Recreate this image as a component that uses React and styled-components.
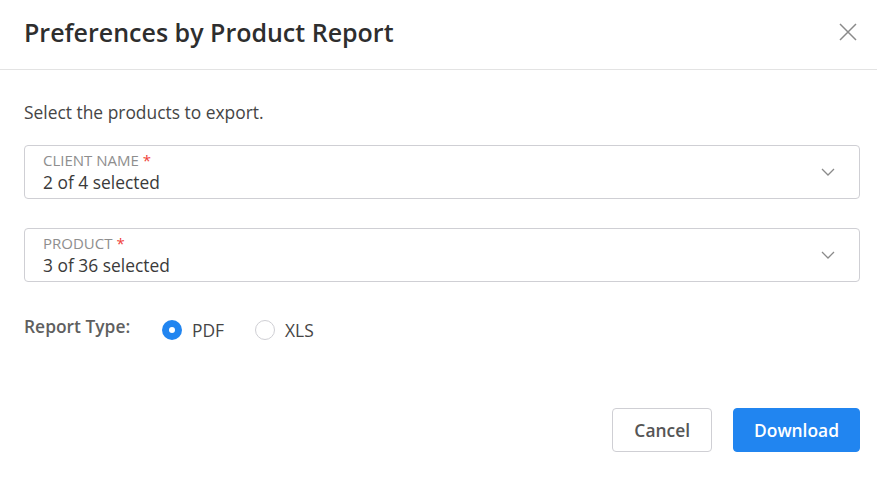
import React, { useState } from 'react';
import styled, { createGlobalStyle } from 'styled-components';

const GlobalStyle = createGlobalStyle`
  html, body {
    margin: 0;
    padding: 0;
    background: #fff;
    font-family: "Open Sans", "Noto Sans", Arial, sans-serif;
  }
  * { box-sizing: border-box; }
`;

const Modal = styled.div`
  width: 877px;
  height: 480px;
  background: #fff;
  display: flex;
  flex-direction: column;
`;

const Header = styled.header`
  height: 70px;
  display: flex;
  align-items: center;
  justify-content: space-between;
  padding: 0 17px 6px 24px;
  border-bottom: 1px solid #e3e3e3;
`;

const Title = styled.h1`
  margin: 0;
  font-size: 25px;
  font-weight: 600;
  color: #2e2e2e;
`;

const CloseButton = styled.button`
  border: 0;
  background: none;
  padding: 0;
  width: 24px;
  height: 24px;
  display: flex;
  align-items: center;
  justify-content: center;
  cursor: pointer;
`;

const Body = styled.div`
  padding: 30px 17px 0 24px;
  display: flex;
  flex-direction: column;
`;

const Intro = styled.p`
  margin: 0 0 21px;
  font-size: 17.4px;
  line-height: 24px;
  color: #454545;
`;

const SelectBox = styled.div`
  height: 54px;
  border: 1px solid #cfcfd4;
  border-radius: 4px;
  padding: 0 24px 0 18px;
  display: flex;
  align-items: center;
  justify-content: space-between;
  margin-bottom: 29px;
  cursor: pointer;
`;

const SelectText = styled.div`
  display: flex;
  flex-direction: column;
`;

const FieldLabel = styled.span`
  font-size: 15px;
  line-height: 19px;
  color: #8e8e8e;
  text-transform: uppercase;
`;

const Required = styled.span`
  color: #f0413a;
  margin-left: 4px;
`;

const FieldValue = styled.span`
  font-size: 17.4px;
  line-height: 24px;
  color: #3a3a3a;
`;

const TypeRow = styled.div`
  display: flex;
  align-items: center;
  margin-top: 7px;
`;

const TypeLabel = styled.span`
  font-size: 17.4px;
  font-weight: 600;
  color: #5f5f5f;
  width: 138px;
  margin-top: -8px;
`;

const RadioOption = styled.label`
  display: flex;
  align-items: center;
  gap: 10px;
  margin-right: 31px;
  font-size: 17.4px;
  color: #454545;
  cursor: pointer;
`;

const RadioDot = styled.span`
  width: 20px;
  height: 20px;
  border-radius: 50%;
  border: ${p => (p.$checked ? '0' : '1px solid #cfcfd4')};
  background: ${p => (p.$checked ? '#2185f0' : '#fff')};
  display: flex;
  align-items: center;
  justify-content: center;
  &::after {
    content: '';
    display: ${p => (p.$checked ? 'block' : 'none')};
    width: 6px;
    height: 6px;
    border-radius: 50%;
    background: #fff;
  }
`;

const Footer = styled.div`
  margin-top: auto;
  padding: 0 17px 28px 24px;
  display: flex;
  justify-content: flex-end;
  gap: 21px;
`;

const Button = styled.button`
  height: 44px;
  padding: 0 ${p => (p.$primary ? '20px' : '21px')};
  border-radius: 4px;
  font-family: inherit;
  font-size: 17.4px;
  font-weight: 600;
  cursor: pointer;
  border: 1px solid ${p => (p.$primary ? '#2185f0' : '#cfcfd4')};
  background: ${p => (p.$primary ? '#2185f0' : '#fff')};
  color: ${p => (p.$primary ? '#fff' : '#555')};
`;

function Chevron() {
  return (
    <svg width="14" height="8" viewBox="0 0 14 8" fill="none">
      <path d="M1 1l6 6 6-6" stroke="#8a8a8a" strokeWidth="1.3" />
    </svg>
  );
}

function Field({ label, value }) {
  return (
    <SelectBox>
      <SelectText>
        <FieldLabel>
          {label}
          <Required>*</Required>
        </FieldLabel>
        <FieldValue>{value}</FieldValue>
      </SelectText>
      <Chevron />
    </SelectBox>
  );
}

export default function App() {
  const [type, setType] = useState('pdf');

  return (
    <>
      <GlobalStyle />
      <Modal>
        <Header>
          <Title>Preferences by Product Report</Title>
          <CloseButton aria-label="Close">
            <svg width="20" height="20" viewBox="0 0 20 20" fill="none">
              <path d="M2 2l16 16M18 2L2 18" stroke="#8a8a8a" strokeWidth="1.5" />
            </svg>
          </CloseButton>
        </Header>
        <Body>
          <Intro>Select the products to export.</Intro>
          <Field label="Client Name" value="2 of 4 selected" />
          <Field label="Product" value="3 of 36 selected" />
          <TypeRow>
            <TypeLabel>Report Type:</TypeLabel>
            <RadioOption onClick={() => setType('pdf')}>
              <RadioDot $checked={type === 'pdf'} />
              PDF
            </RadioOption>
            <RadioOption onClick={() => setType('xls')}>
              <RadioDot $checked={type === 'xls'} />
              XLS
            </RadioOption>
          </TypeRow>
        </Body>
        <Footer>
          <Button>Cancel</Button>
          <Button $primary>Download</Button>
        </Footer>
      </Modal>
    </>
  );
}
